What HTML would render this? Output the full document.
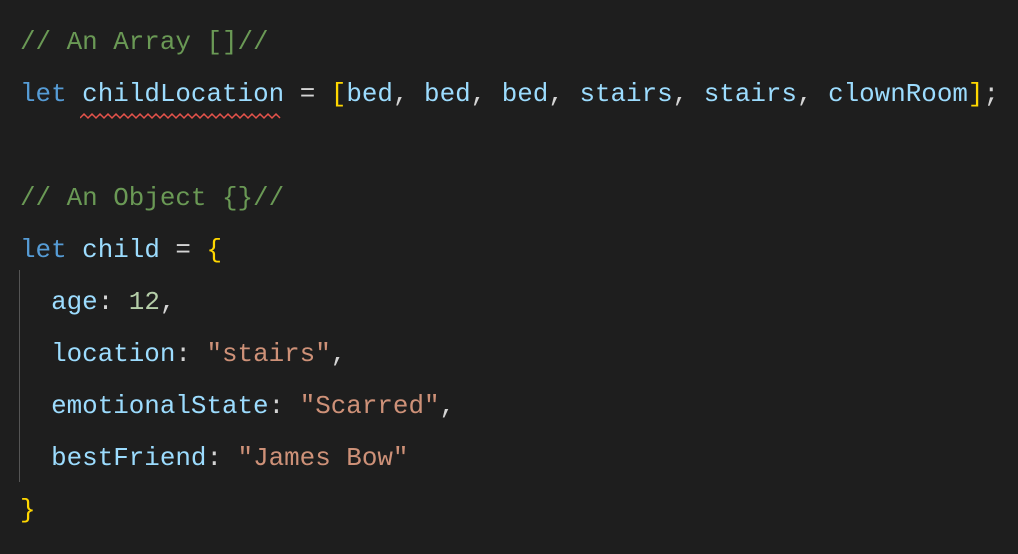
<!DOCTYPE html>
<html><head><style>
html,body{margin:0;padding:0;background:#1e1e1e;width:1018px;height:554px;overflow:hidden}
pre{margin:0;position:absolute;left:20px;top:16px;font-family:"Liberation Mono",monospace;font-size:25.9px;line-height:52px;color:#d4d4d4;letter-spacing:0}
.c{color:#6a9955}.k{color:#569cd6}.v{color:#9cdcfe}.b{color:#ffd700}.s{color:#ce9178}.n{color:#b5cea8}
.guide{position:absolute;left:19px;top:270px;width:1px;height:212px;background:#555}
.sq{position:absolute;left:80px;top:112px}
</style></head><body>
<div class="guide"></div>
<svg class="sq" width="206" height="8"><path d="M0 6 l4 -4 l4 4 l4 -4 l4 4 l4 -4 l4 4 l4 -4 l4 4 l4 -4 l4 4 l4 -4 l4 4 l4 -4 l4 4 l4 -4 l4 4 l4 -4 l4 4 l4 -4 l4 4 l4 -4 l4 4 l4 -4 l4 4 l4 -4 l4 4 l4 -4 l4 4 l4 -4 l4 4 l4 -4 l4 4 l4 -4 l4 4 l4 -4 l4 4 l4 -4 l4 4 l4 -4 l4 4 l4 -4 l4 4 l4 -4 l4 4 l4 -4 l4 4 l4 -4 l4 4 l4 -4 l4 4" fill="none" stroke="#e5534b" stroke-width="1.5"/></svg>
<pre><span class="c">// An Array []//</span>
<span class="k">let</span> <span class="v">childLocation</span> = <span class="b">[</span><span class="v">bed</span>, <span class="v">bed</span>, <span class="v">bed</span>, <span class="v">stairs</span>, <span class="v">stairs</span>, <span class="v">clownRoom</span><span class="b">]</span>;

<span class="c">// An Object {}//</span>
<span class="k">let</span> <span class="v">child</span> = <span class="b">{</span>
  <span class="v">age</span>: <span class="n">12</span>,
  <span class="v">location</span>: <span class="s">"stairs"</span>,
  <span class="v">emotionalState</span>: <span class="s">"Scarred"</span>,
  <span class="v">bestFriend</span>: <span class="s">"James Bow"</span>
<span class="b">}</span></pre>
</body></html>
